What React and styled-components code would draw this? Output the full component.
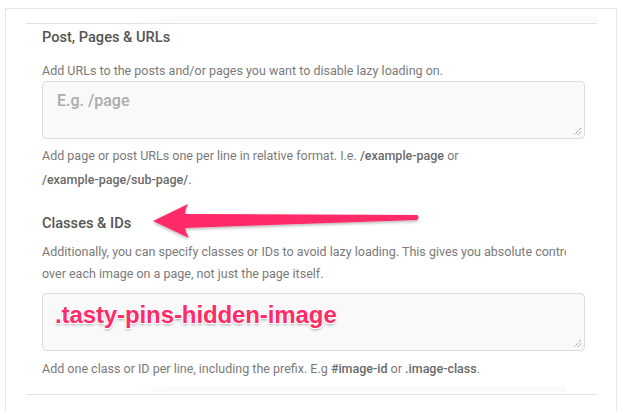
import React from "react";
import styled, { createGlobalStyle } from "styled-components";

const Global = createGlobalStyle`
  html, body { margin: 0; padding: 0; background: #fff; }
  body { font-family: Roboto, "Liberation Sans", sans-serif; }
`;

const Page = styled.div`
  width: 627px;
  height: 414px;
  padding: 8px 10px 3px 5px;
  box-sizing: border-box;
  overflow: hidden;
`;

const Card = styled.div`
  position: relative;
  height: 100%;
  border: 1px solid #e6e6e6;
  border-bottom: none;
  box-sizing: border-box;
  padding: 7px 19px 0 20px;
`;

const Rule = styled.div`
  height: 1px;
  background: #e2e2e2;
`;

const Body = styled.div`
  padding: 0 10px 0 16px;
`;

const Section = styled.section`
  display: flex;
  flex-direction: column;
  margin-top: ${(p) => p.$top}px;
`;

const Title = styled.h3`
  margin: 0;
  font-size: 14.6px;
  font-weight: 500;
  color: #555;
  line-height: 20px;
`;

const Desc = styled.p`
  margin: ${(p) => p.$mt || 0}px 0 0;
  font-size: 12.5px;
  color: #7a7a7a;
  line-height: ${(p) => p.$lh || 21}px;
  ${(p) =>
    p.$clip &&
    `white-space: nowrap; overflow: hidden; width: 524px;`}
  b {
    font-weight: 500;
    color: #6a6a6a;
  }
`;

const Area = styled.div`
  position: relative;
  margin-top: ${(p) => p.$mt}px;
  width: 543px;
  height: 58px;
  box-sizing: border-box;
  border: 1px solid #dcdcdc;
  border-radius: 4px;
  background: #f9f9f9;
  padding: 9px 14px 8px;
`;

const Placeholder = styled.span`
  font-size: 16px;
  color: #ababab;
  font-weight: 500;
`;

const Grip = styled.svg`
  position: absolute;
  right: 2px;
  bottom: 2px;
`;

const Highlight = styled.span`
  display: inline-block;
  margin: -2px 0 0 -2px;
  font-family: "Liberation Sans", Arial, sans-serif;
  font-weight: 700;
  font-size: 24px;
  letter-spacing: -0.1px;
  color: #ff2a68;
  text-shadow: 1px 1px 0 #fff, -1px -1px 0 #fff, 1px -1px 0 #fff,
    -1px 1px 0 #fff, 0 2px 3px rgba(0, 0, 0, 0.35);
`;

const Arrow = styled.svg`
  position: absolute;
  left: 145px;
  top: 187px;
  overflow: visible;
`;

const Fade = styled.div`
  height: 6px;
  margin: ${(p) => p.$m};
  background: linear-gradient(to right, rgba(0,0,0,0), rgba(0,0,0,0.018) 10%, rgba(0,0,0,0.018));
`;

function ResizeGrip() {
  return (
    <Grip width="10" height="10" viewBox="0 0 10 10">
      <path d="M9 2 L2 9 M9 5.5 L5.5 9" stroke="#777" strokeWidth="1" strokeDasharray="1 1" />
    </Grip>
  );
}

export default function App() {
  return (
    <>
      <Global />
      <Page>
        <Card>
          <Fade $m="0 0 1px 104px" />
          <Rule />
          <Body>
            <Section $top={3}>
              <Title>Post, Pages &amp; URLs</Title>
              <Desc $mt={13}>
                Add URLs to the posts and/or pages you want to disable lazy loading on.
              </Desc>
              <Area $mt={0}>
                <Placeholder>E.g. /page</Placeholder>
                <ResizeGrip />
              </Area>
              <Desc $mt={5} $lh={24}>
                Add page or post URLs one per line in relative format. I.e. <b>/example-page</b> or
                <br />
                <b>/example-page/sub-page/</b>.
              </Desc>
            </Section>
            <Section $top={21}>
              <Title>Classes &amp; IDs</Title>
              <Desc $mt={8} $lh={22} $clip>
                Additionally, you can specify classes or IDs to avoid lazy loading. This gives you absolute control
                <br />
                over each image on a page, not just the page itself.
              </Desc>
              <Area $mt={8}>
                <Highlight>.tasty-pins-hidden-image</Highlight>
                <ResizeGrip />
              </Area>
              <Desc $mt={7}>
                Add one class or ID per line, including the prefix. E.g <b>#image-id</b> or <b>.image-class</b>.
              </Desc>
            </Section>
          </Body>
          <Fade $m="7px 31px 2px 104px" />
          <Rule />
          <Arrow width="270" height="45" viewBox="0 0 270 45">
            <defs>
              <filter id="sh" x="-10%" y="-50%" width="120%" height="200%">
                <feDropShadow dx="0" dy="1.5" stdDeviation="1.5" floodColor="#000" floodOpacity="0.3" />
              </filter>
            </defs>
            <path
              filter="url(#sh)"
              fill="#ff2a68"
              d="M2 25 L37 8 Q34 13 34 18 L266 19 Q269 21 266 24 L34 32 Q35 37 38 42 Z"
            />
          </Arrow>
        </Card>
      </Page>
    </>
  );
}
